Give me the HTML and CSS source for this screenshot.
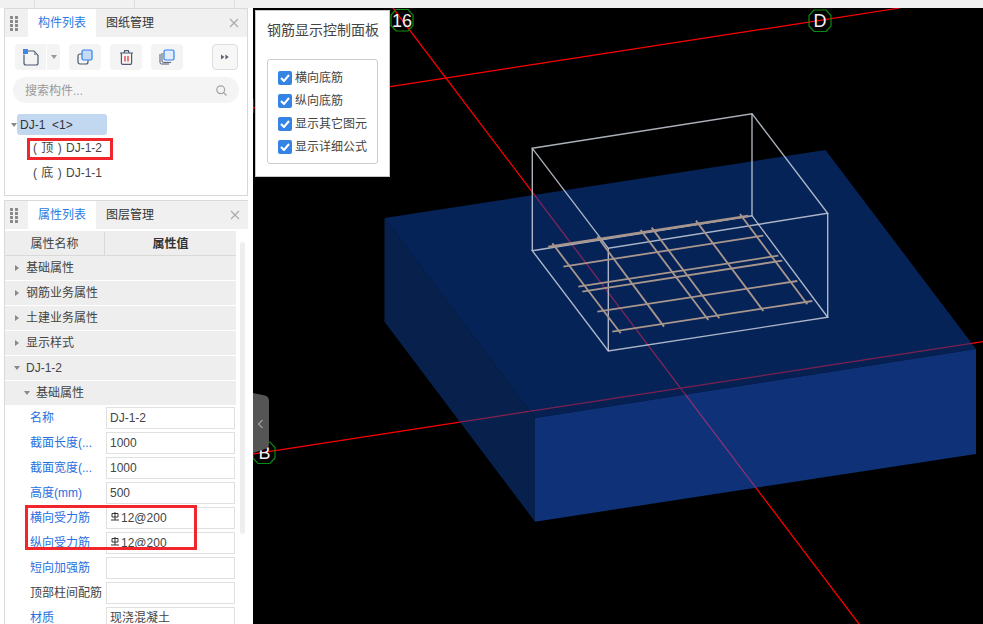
FILE: index.html
```html
<!DOCTYPE html>
<html lang="zh">
<head>
<meta charset="utf-8">
<title>钢筋显示</title>
<link rel="stylesheet" href="styles.css">
</head>
<body>
<div class="app">
  <div class="topstrip"><i></i><i></i><i></i></div>
  <div class="main">
    <aside class="sidebar">
      <section class="panel panel-tree">
        <header class="tabbar">
          <span class="grip"><b></b><b></b><b></b><b></b><b></b><b></b><b></b><b></b></span>
          <span class="tab active">构件列表</span>
          <span class="tab">图纸管理</span>
          <svg class="close" width="10" height="10" viewBox="0 0 10 10"><path d="M1 1l8 8M9 1l-8 8" stroke="#a8a8a8" stroke-width="1.1" fill="none"/></svg>
        </header>
        <div class="toolbar">
          <div class="tbtn split">
            <span class="split-main">
              <svg width="16" height="17" viewBox="0 0 16 17"><path d="M1 5.5V14a2 2 0 0 0 2 2h10a2 2 0 0 0 2-2V6.5L11 2H5" fill="none" stroke="#4f5b70" stroke-width="1.2"/><path d="M11 2.5V6h3.6z" fill="#9aa3b2"/><path d="M0 0h5v5H0z" fill="#3d86ea"/></svg>
            </span>
            <span class="split-arrow"></span>
          </div>
          <div class="tbtn">
            <svg width="16" height="16" viewBox="0 0 16 16"><rect x="1" y="5" width="10" height="10" rx="2" fill="none" stroke="#4f5b70" stroke-width="1.2"/><rect x="5" y="1" width="10" height="10" rx="1.5" fill="#c5daf5" stroke="#2f80ed" stroke-width="1.2"/></svg>
          </div>
          <div class="tbtn">
            <svg width="15" height="16" viewBox="0 0 15 16"><path d="M1 4h13M5 4l.6-2.4h3.8L10 4M2.4 4v10a1.4 1.4 0 0 0 1.4 1.4h7.4a1.4 1.4 0 0 0 1.4-1.4V4" fill="none" stroke="#4f5b70" stroke-width="1.2"/><path d="M6 7v5.5M9 7v5.5" stroke="#e03030" stroke-width="1.2"/></svg>
          </div>
          <div class="tbtn">
            <svg width="16" height="16" viewBox="0 0 16 16"><path d="M1 5v8.5a1.5 1.5 0 0 0 1.5 1.5H10" fill="none" stroke="#4f5b70" stroke-width="1"/><path d="M3 4v8a1.4 1.4 0 0 0 1.4 1.4H12" fill="none" stroke="#4f5b70" stroke-width="1"/><rect x="5" y="1" width="10" height="10" rx="1.5" fill="#e2edfb" stroke="#2f80ed" stroke-width="1.2"/></svg>
          </div>
          <div class="tbtn more">
            <svg width="8" height="6" viewBox="0 0 8 6"><path d="M0 .5L3.4 3 0 5.5zM4.4 .5L7.8 3 4.4 5.5z" fill="#5a6475"/></svg>
          </div>
        </div>
        <div class="search">
          <span>搜索构件...</span>
          <svg width="11" height="11" viewBox="0 0 11 11"><circle cx="4.7" cy="4.7" r="3.9" fill="none" stroke="#a3a3a3" stroke-width="1.2"/><path d="M7.6 7.6L10.5 10.5" stroke="#a3a3a3" stroke-width="1.3"/></svg>
        </div>
        <ul class="tree">
          <li class="tree-root"><span class="caret-down"></span><span class="tree-sel">DJ-1&nbsp; &lt;1&gt;</span></li>
          <li class="tree-leaf">( 顶 ) DJ-1-2</li>
          <li class="tree-leaf">( 底 ) DJ-1-1</li>
        </ul>
      </section>

      <section class="panel panel-props">
        <header class="tabbar">
          <span class="grip"><b></b><b></b><b></b><b></b><b></b><b></b><b></b><b></b></span>
          <span class="tab active">属性列表</span>
          <span class="tab">图层管理</span>
          <svg class="close" width="10" height="10" viewBox="0 0 10 10"><path d="M1 1l8 8M9 1l-8 8" stroke="#a8a8a8" stroke-width="1.1" fill="none"/></svg>
        </header>
        <div class="props-wrap">
          <div class="props">
            <div class="thead"><span class="th-name">属性名称</span><span class="th-value">属性值</span></div>
            <div class="group"><span class="caret-right"></span>基础属性</div>
            <div class="group"><span class="caret-right"></span>钢筋业务属性</div>
            <div class="group"><span class="caret-right"></span>土建业务属性</div>
            <div class="group"><span class="caret-right"></span>显示样式</div>
            <div class="group"><span class="caret-down"></span>DJ-1-2</div>
            <div class="group sub"><span class="caret-down"></span>基础属性</div>
            <div class="prop"><label>名称</label><span class="val">DJ-1-2</span></div>
            <div class="prop"><label>截面长度(...</label><span class="val">1000</span></div>
            <div class="prop"><label>截面宽度(...</label><span class="val">1000</span></div>
            <div class="prop"><label>高度(mm)</label><span class="val">500</span></div>
            <div class="prop"><label>横向受力筋</label><span class="val rebar"><svg width="8" height="9" viewBox="0 0 8 9"><path d="M1 1.500h6v3.500H1zM4 0v8M0 8h8" fill="none" stroke="#333" stroke-width="1"/></svg>12@200</span></div>
            <div class="prop"><label>纵向受力筋</label><span class="val rebar"><svg width="8" height="9" viewBox="0 0 8 9"><path d="M1 1.500h6v3.500H1zM4 0v8M0 8h8" fill="none" stroke="#333" stroke-width="1"/></svg>12@200</span></div>
            <div class="prop"><label>短向加强筋</label><span class="val"></span></div>
            <div class="prop"><label class="plain">顶部柱间配筋</label><span class="val"></span></div>
            <div class="prop"><label>材质</label><span class="val">现浇混凝土</span></div>
          </div>
          <div class="scrollbar"></div>
        </div>
      </section>
    </aside>

    <main class="canvas">
      <svg class="scene" width="730" height="616" viewBox="253 8 730 616">
        <g fill="none" stroke="#f00" stroke-width="1.250">
          <path d="M253 107.800L900 8"/>
          <path d="M253 454L983 341.600"/>
          <path d="M393 8L859 624"/>
        </g>
        <g fill="none" stroke="#0c8c0c" stroke-width="1.200">
          <path d="M396 9.500L408 9.500L413 15L413 25.500L408 31L396 31L391 25.500L391 15Z"/>
          <path d="M814 10L826 10L831 15.500L831 26L826 31.500L814 31.500L809 26L809 15.500Z"/>
          <path d="M258 442L270 442L275 447.500L275 458L270 463.500L258 463.500L253 458L253 447.500Z"/>
          <path d="M253 99V113"/>
        </g>
        <g class="axis-label">
          <text x="402" y="26.500" text-anchor="middle">16</text>
          <text x="820" y="27" text-anchor="middle">D</text>
          <text x="264.500" y="459" text-anchor="middle">B</text>
        </g>
        <polygon points="384.500,321.700 535,521.700 535,418 384.500,218" fill="#0e4098" opacity=".5"/>
        <polygon points="535,521.700 976,454 976,349 535,418" fill="#1c62f0" opacity=".5"/>
        <polygon points="384.500,218 825.500,150 976,349 535,418" fill="#0c46b0" opacity=".5"/>
        <polygon points="528,411 971,342.700 976,349 535,418" fill="#000" opacity=".08"/>
        <g fill="none" stroke="#c9cfdb" stroke-width="1.400" stroke-opacity=".85">
          <path d="M532.300 148.300L752 113.700L827.700 213.300L608.300 248.300Z"/>
          <path d="M532.300 148.300V250.700M752 113.700V215.700M827.700 213.300V317.300M608.300 248.300V351"/>
          <path d="M532.300 250.700L752 215.700L827.700 317.300L608.300 351Z"/>
        </g>
        <g transform="translate(520 100) scale(.3333)" fill="none" stroke="#a8968c" stroke-width="5.500">
          <path d="M85 441L685 348" stroke-width="8"/>
          <path d="M130 500L730 407M175 560L775 467M187 575L787 482M232 635L832 543M277 695L877 603"/>
          <path d="M97 430L302 700M232 410L432 680M362 390L565 660M395 383L598 655M528 362L730 633M660 342L862 613"/>
        </g>
      </svg>

      <aside class="control">
        <h2>钢筋显示控制面板</h2>
        <div class="checks">
          <label class="check"><span class="box"><svg width="10" height="8" viewBox="0 0 10 8"><path d="M1 4l3 3 5-6" fill="none" stroke="#fff" stroke-width="2"/></svg></span>横向底筋</label>
          <label class="check"><span class="box"><svg width="10" height="8" viewBox="0 0 10 8"><path d="M1 4l3 3 5-6" fill="none" stroke="#fff" stroke-width="2"/></svg></span>纵向底筋</label>
          <label class="check"><span class="box"><svg width="10" height="8" viewBox="0 0 10 8"><path d="M1 4l3 3 5-6" fill="none" stroke="#fff" stroke-width="2"/></svg></span>显示其它图元</label>
          <label class="check"><span class="box"><svg width="10" height="8" viewBox="0 0 10 8"><path d="M1 4l3 3 5-6" fill="none" stroke="#fff" stroke-width="2"/></svg></span>显示详细公式</label>
        </div>
      </aside>

      <div class="handle">
        <svg width="16" height="60" viewBox="0 0 16 60"><path d="M0 0L12 2.500Q16 3.500 16 8V51Q16 55 12 56L0 60Z" fill="#555"/><path d="M9.500 27L5.500 31l4 4" fill="none" stroke="#a0a0a0" stroke-width="1.200"/></svg>
      </div>
    </main>
  </div>
  <div class="mark mark-tree"></div>
  <div class="mark mark-rebar"></div>
</div>
</body>
</html>
```
FILE: styles.css
```css
* { box-sizing: border-box; }
html, body { margin: 0; padding: 0; height: 100%; overflow: hidden; background: #fff; }
body { font: 12px/1 "Liberation Sans", "Noto Sans CJK SC", sans-serif; color: #444; }
ul { list-style: none; margin: 0; padding: 0; }
.app { position: relative; width: 983px; height: 624px; overflow: hidden; display: flex; flex-direction: column; }

.topstrip { height: 8px; background: #f1f1f1; flex: none; display: flex; padding-left: 34px; gap: 99px; }
.topstrip i { width: 1px; background: #ddd; }

.main { flex: 1; display: flex; min-height: 0; }
.sidebar { width: 253px; flex: none; padding: 0 5px 0 4px; display: flex; flex-direction: column; gap: 4px; }

.panel { border: 1px solid #d9d9d9; background: #fff; }
.panel-tree { height: 188px; }
.panel-props { flex: 1; min-height: 0; border-right: 0; border-bottom: 0; overflow: hidden; }

.tabbar { height: 28px; background: #f0f0f0; display: flex; align-items: center; position: relative; padding-left: 5px; }
.grip { width: 8px; height: 15px; display: grid; grid-template-columns: 3px 3px; gap: 1px 2px; margin-right: 10px; }
.grip b { width: 3px; height: 3px; background: #8a8a8a; }
.tab { width: 68px; height: 28px; display: flex; align-items: center; justify-content: center; color: #333; }
.tab.active { background: #fff; color: #2a7be4; }
.tab + .tab { margin-left: 5px; width: 58px; justify-content: flex-start; padding-left: 5px; }
.close { position: absolute; right: 8px; top: 9px; }

.toolbar { display: flex; align-items: center; height: 26px; margin: 7px 0 0 10px; gap: 9px; }
.tbtn { width: 32px; height: 26px; border-radius: 4px; background: #f4f4f4; display: flex; align-items: center; justify-content: center; }
.tbtn.split { width: 45px; justify-content: flex-start; }
.split-main { width: 32px; height: 26px; display: flex; align-items: center; justify-content: center; border-right: 1px solid #fff; }
.split-arrow { width: 0; height: 0; margin-left: 4px; border: 3.5px solid transparent; border-top: 4px solid #999; border-bottom: 0; }
.tbtn.more { width: 26px; margin-left: 20px; background: #f7f7f7; border: 1px solid #ddd; }

.search { height: 26px; margin: 7px 8px 0 8px; border-radius: 13px; background: #f4f4f4; display: flex; align-items: center; justify-content: space-between; padding: 1px 12px 0; color: #999; }

.tree { margin-top: 11px; padding-left: 6px; }
.tree-root { height: 21px; display: flex; align-items: center; }
.tree-sel { width: 90px; height: 21px; padding-left: 3px; display: flex; align-items: center; background: #c2d8f0; border-radius: 3px; color: #333; }
.tree-leaf { height: 25px; padding-left: 22px; display: flex; align-items: center; color: #444; word-spacing: 1px; white-space: pre; }

.caret-down { width: 0; height: 0; flex: none; border: 3px solid transparent; border-top: 4px solid #888; border-bottom: 0; }
.caret-right { width: 0; height: 0; flex: none; border: 3px solid transparent; border-left: 4px solid #888; border-right: 0; }

.props-wrap { display: flex; padding-top: 2px; height: 100%; }
.props { width: 231px; flex: none; }
.scrollbar { width: 5px; height: 292px; margin: 11px 0 0 4px; background: #eee; border-radius: 3px; }

.thead { height: 25px; padding-top: 1px; display: flex; background: #eee; border-bottom: 1px solid #d9d9d9; color: #444; }
.th-name { width: 100px; display: flex; align-items: center; justify-content: center; border-right: 1px solid #d9d9d9; }
.th-value { flex: 1; display: flex; align-items: center; justify-content: center; font-weight: bold; color: #333; }

.group { height: 24px; margin-bottom: 1px; background: #eee; display: flex; align-items: center; padding-left: 10px; color: #444; }
.group > span { margin-right: 7px; }
.group > .caret-down { margin-right: 6px; margin-left: -1px; }
.group.sub { padding-left: 20px; margin-bottom: 0; }

.prop { height: 25px; display: flex; align-items: center; padding-left: 25px; }
.prop label { width: 76px; flex: none; color: #2a6fe0; white-space: nowrap; }
.prop label.plain { color: #444; }
.val { width: 129px; height: 22px; flex: none; border: 1px solid #e0e0e0; padding-left: 3px; display: flex; align-items: center; color: #444; background: #fff; }
.val.rebar svg { margin: -3px 2px 0 1px; }

.canvas { flex: 1; position: relative; background: #000; overflow: hidden; }
.scene { display: block; }
.axis-label text { fill: #f2f2f2; font: 18px "Liberation Sans", sans-serif; }

.control { position: absolute; left: 2px; top: 2px; width: 135px; height: 167px; background: #fff; border: 1px solid #c8c8c8; padding: 0 11px; }
.control h2 { margin: 11px 0 0; font-size: 14px; line-height: 16px; font-weight: normal; color: #444; text-align: center; white-space: nowrap; }
.checks { margin-top: 21px; height: 105px; border: 1px solid #ccc; border-radius: 3px; padding: 11px 0 0 10px; display: flex; flex-direction: column; gap: 9px; }
.check { display: flex; align-items: center; height: 14px; color: #444; white-space: nowrap; }
.box { width: 14px; height: 14px; margin-right: 3px; border-radius: 2px; background: #3584e4; display: flex; align-items: center; justify-content: center; }

.handle { position: absolute; left: 0; top: 385px; line-height: 0; }

.mark { position: absolute; border: 3px solid #f0262c; pointer-events: none; }
.mark-tree { left: 27px; top: 138px; width: 86px; height: 22px; }
.mark-rebar { left: 25px; top: 505px; width: 172px; height: 45px; }
```
